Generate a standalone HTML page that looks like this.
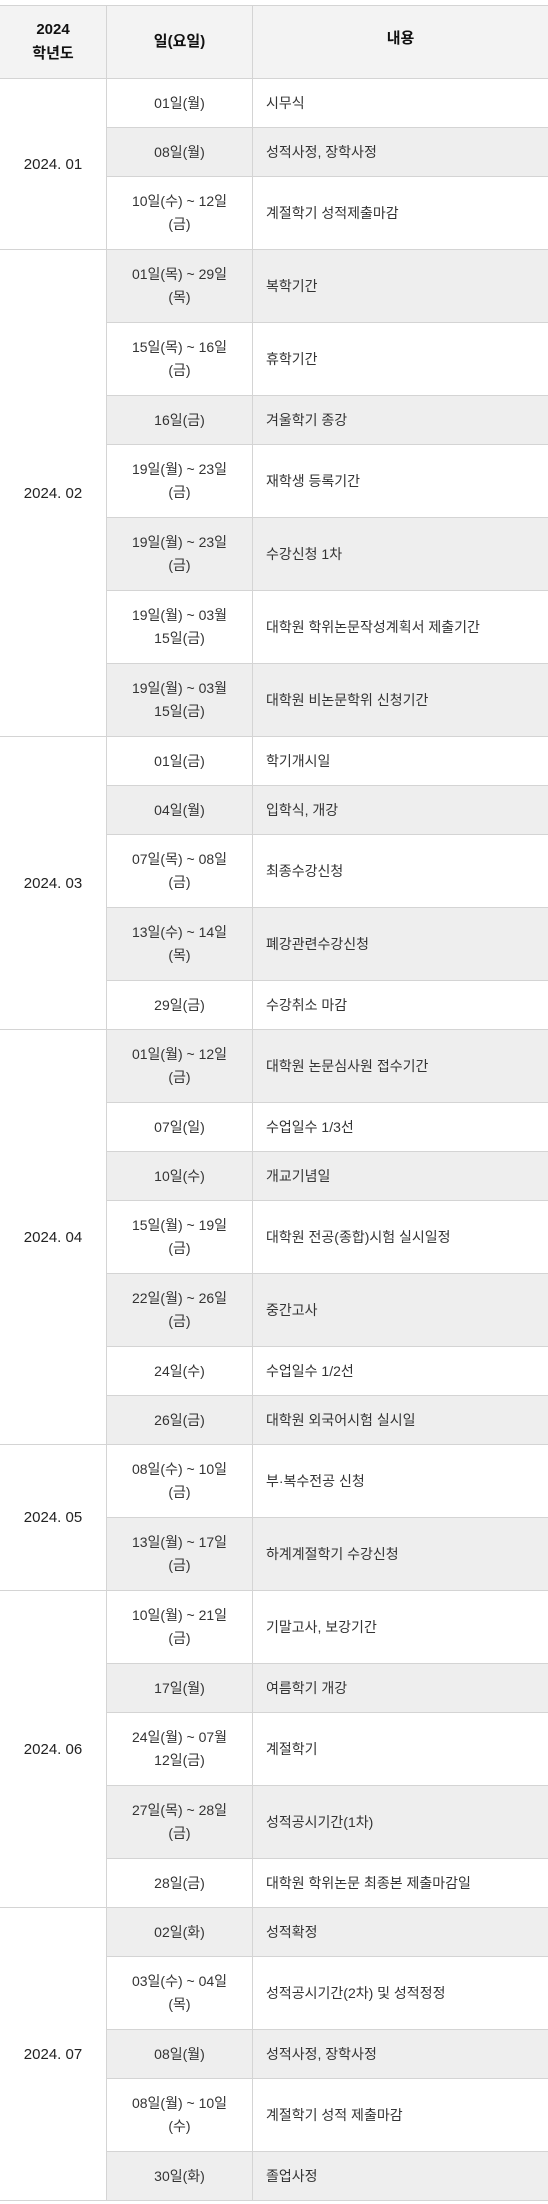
<!DOCTYPE html>
<html><head><meta charset="utf-8">
<style>
*{margin:0;padding:0;box-sizing:border-box}
body{width:548px;height:2204px;background:#fff;font-family:"Liberation Sans","Noto Sans CJK KR",sans-serif;font-size:14px;color:#333;}
.t{position:absolute;left:0;top:5px;width:548px;border-top:1px solid #d4d4d4}
.hd{display:flex;height:73px;background:#f3f3f3;border-bottom:1px solid #d4d4d4;font-weight:bold;color:#111;font-size:15px}
.hd div{display:flex;align-items:center;justify-content:center;text-align:center;line-height:24px}
.c1{width:106px;flex:none}
.c2{width:146px;flex:none;border-left:1px solid #d4d4d4}
.c3{flex:1;border-left:1px solid #d4d4d4}
.sec{display:flex;border-bottom:1px solid #d4d4d4}
.sec>.c1{display:flex;align-items:center;justify-content:center;font-size:15px;color:#222}
.rows{flex:1}
.r{display:flex;border-bottom:1px solid #d4d4d4;height:49px}
.r:last-child{border-bottom:none;height:48px}
.r.d{height:73px}
.r.d:last-child{height:72px}
.r.g{background:#eee}
.r .c2{display:flex;align-items:center;justify-content:center;text-align:center;line-height:23px;border-left:1px solid #d4d4d4}
.r .c3{display:flex;align-items:center;padding-left:13px}
</style></head><body>
<div class="t">
<div class="hd"><div class="c1">2024<br>학년도</div><div class="c2">일(요일)</div><div class="c3" style="padding-bottom:6px">내용</div></div>

<div class="sec"><div class="c1">2024. 01</div><div class="rows">
<div class="r"><div class="c2">01일(월)</div><div class="c3">시무식</div></div>
<div class="r g"><div class="c2">08일(월)</div><div class="c3">성적사정, 장학사정</div></div>
<div class="r d"><div class="c2">10일(수) ~ 12일<br>(금)</div><div class="c3">계절학기 성적제출마감</div></div>
</div></div>

<div class="sec"><div class="c1">2024. 02</div><div class="rows">
<div class="r d g"><div class="c2">01일(목) ~ 29일<br>(목)</div><div class="c3">복학기간</div></div>
<div class="r d"><div class="c2">15일(목) ~ 16일<br>(금)</div><div class="c3">휴학기간</div></div>
<div class="r g"><div class="c2">16일(금)</div><div class="c3">겨울학기 종강</div></div>
<div class="r d"><div class="c2">19일(월) ~ 23일<br>(금)</div><div class="c3">재학생 등록기간</div></div>
<div class="r d g"><div class="c2">19일(월) ~ 23일<br>(금)</div><div class="c3">수강신청 1차</div></div>
<div class="r d"><div class="c2">19일(월) ~ 03월<br>15일(금)</div><div class="c3">대학원 학위논문작성계획서 제출기간</div></div>
<div class="r d g"><div class="c2">19일(월) ~ 03월<br>15일(금)</div><div class="c3">대학원 비논문학위 신청기간</div></div>
</div></div>

<div class="sec"><div class="c1">2024. 03</div><div class="rows">
<div class="r"><div class="c2">01일(금)</div><div class="c3">학기개시일</div></div>
<div class="r g"><div class="c2">04일(월)</div><div class="c3">입학식, 개강</div></div>
<div class="r d"><div class="c2">07일(목) ~ 08일<br>(금)</div><div class="c3">최종수강신청</div></div>
<div class="r d g"><div class="c2">13일(수) ~ 14일<br>(목)</div><div class="c3">폐강관련수강신청</div></div>
<div class="r"><div class="c2">29일(금)</div><div class="c3">수강취소 마감</div></div>
</div></div>

<div class="sec"><div class="c1">2024. 04</div><div class="rows">
<div class="r d g"><div class="c2">01일(월) ~ 12일<br>(금)</div><div class="c3">대학원 논문심사원 접수기간</div></div>
<div class="r"><div class="c2">07일(일)</div><div class="c3">수업일수 1/3선</div></div>
<div class="r g"><div class="c2">10일(수)</div><div class="c3">개교기념일</div></div>
<div class="r d"><div class="c2">15일(월) ~ 19일<br>(금)</div><div class="c3">대학원 전공(종합)시험 실시일정</div></div>
<div class="r d g"><div class="c2">22일(월) ~ 26일<br>(금)</div><div class="c3">중간고사</div></div>
<div class="r"><div class="c2">24일(수)</div><div class="c3">수업일수 1/2선</div></div>
<div class="r g"><div class="c2">26일(금)</div><div class="c3">대학원 외국어시험 실시일</div></div>
</div></div>

<div class="sec"><div class="c1">2024. 05</div><div class="rows">
<div class="r d"><div class="c2">08일(수) ~ 10일<br>(금)</div><div class="c3">부·복수전공 신청</div></div>
<div class="r d g"><div class="c2">13일(월) ~ 17일<br>(금)</div><div class="c3">하계계절학기 수강신청</div></div>
</div></div>

<div class="sec"><div class="c1">2024. 06</div><div class="rows">
<div class="r d"><div class="c2">10일(월) ~ 21일<br>(금)</div><div class="c3">기말고사, 보강기간</div></div>
<div class="r g"><div class="c2">17일(월)</div><div class="c3">여름학기 개강</div></div>
<div class="r d"><div class="c2">24일(월) ~ 07월<br>12일(금)</div><div class="c3">계절학기</div></div>
<div class="r d g"><div class="c2">27일(목) ~ 28일<br>(금)</div><div class="c3">성적공시기간(1차)</div></div>
<div class="r"><div class="c2">28일(금)</div><div class="c3">대학원 학위논문 최종본 제출마감일</div></div>
</div></div>

<div class="sec"><div class="c1">2024. 07</div><div class="rows">
<div class="r g"><div class="c2">02일(화)</div><div class="c3">성적확정</div></div>
<div class="r d"><div class="c2">03일(수) ~ 04일<br>(목)</div><div class="c3">성적공시기간(2차) 및 성적정정</div></div>
<div class="r g"><div class="c2">08일(월)</div><div class="c3">성적사정, 장학사정</div></div>
<div class="r d"><div class="c2">08일(월) ~ 10일<br>(수)</div><div class="c3">계절학기 성적 제출마감</div></div>
<div class="r g"><div class="c2">30일(화)</div><div class="c3">졸업사정</div></div>
</div></div>
</div>
</body></html>
